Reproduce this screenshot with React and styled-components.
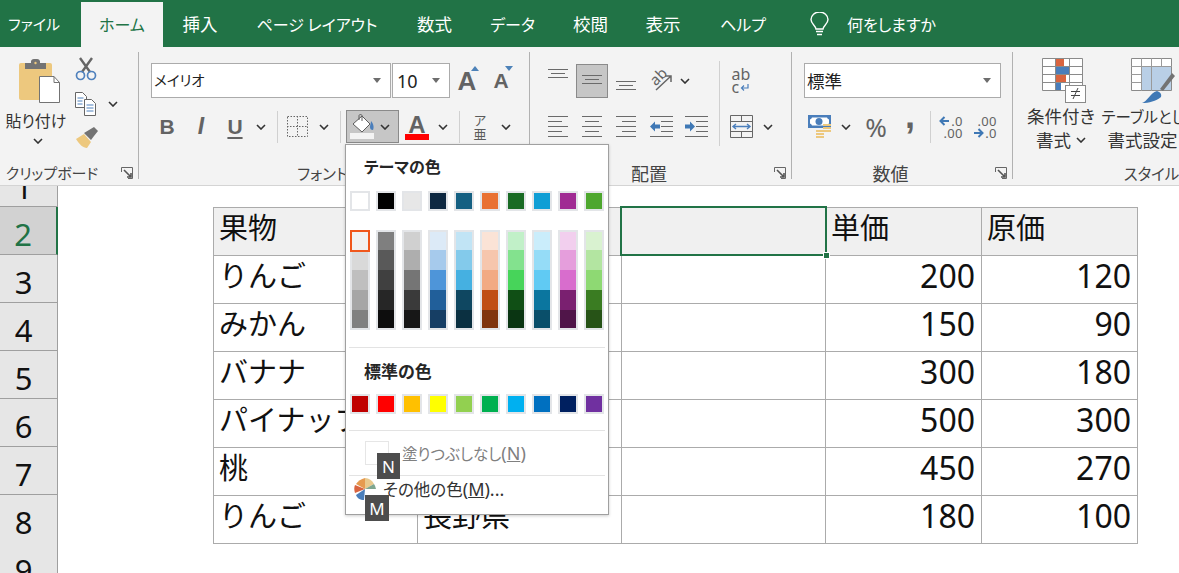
import React from "react";
import styled, { createGlobalStyle } from "styled-components";

const JP = `"Noto Sans CJK JP", "Noto Sans", sans-serif`;
const LAT = `"Noto Sans", "Noto Sans CJK JP", sans-serif`;

const Global = createGlobalStyle`
  html, body { margin: 0; padding: 0; background: #fff; }
  body { font-family: ${JP}; font-feature-settings: "palt"; color: #222; }
  * { box-sizing: border-box; }
`;

const Page = styled.div`
  position: relative; width: 1179px; height: 573px; overflow: hidden; background: #fff;
`;

/* ---------- tab bar ---------- */
const TabBar = styled.div`
  display: flex; align-items: flex-end; height: 47px; padding-top: 2px; background: #217346;
`;
const Tab = styled.div`
  height: 45px; display: flex; align-items: center; justify-content: center;
  width: ${p => p.$w}px; flex: none;
  font-size: ${p => p.$s}px; padding: 0 ${p => p.$pr || 0}px 2px 0; white-space: nowrap;
  color: ${p => (p.$active ? "#217346" : "#fff")};
  background: ${p => (p.$active ? "#f3f3f3" : "transparent")};
`;
const TellMe = styled.div`
  display: flex; align-items: center; gap: 18px; margin-left: 22px; height: 45px;
  font-size: 16px; color: #fff; padding-bottom: 2px;
`;

/* ---------- ribbon ---------- */
const Ribbon = styled.div`
  display: flex; height: 139px; padding-top: 5px; background: #f3f3f3;
  border-bottom: 1px solid #d4d4d4; overflow: hidden;
`;
const Group = styled.div`
  flex: none; width: ${p => p.$w}px; height: 127px; display: flex; flex-direction: column;
  border-right: ${p => (p.$open ? "none" : "1px solid #b1b1b1")};
`;
const GroupBody = styled.div`
  flex: 1; display: flex; min-height: 0;
  padding: ${p => p.$pad || "0"};
`;
const GroupFooter = styled.div`
  height: 12px; flex: none; display: flex; align-items: center; padding-right: 5px;
`;
const GroupLabel = styled.div`
  flex: 1; text-align: center; font-size: ${p => p.$s || 15.5}px; line-height: 12px; color: #444; white-space: nowrap;
  padding-right: ${p => p.$shift || 0}px;
`;
const Launcher = styled.svg`
  flex: none; width: 12px; height: 12px; margin-left: 6px;
`;
const Stack = styled.div`
  display: flex; flex-direction: column; gap: ${p => p.$gap ?? 0}px; flex: none;
`;
const ToolRow = styled.div`
  display: flex; align-items: center; height: ${p => p.$h || 33}px; flex: none;
  margin-top: ${p => p.$mt || 0}px;
`;
const Tool = styled.div`
  flex: none; width: ${p => p.$w}px; height: 100%; display: flex; align-items: center; justify-content: center;
  margin-left: ${p => p.$ml || 0}px; color: #636363;
`;
const Pressed = styled(Tool)`
  background: #c6c6c6; border: 1px solid #8a8a8a;
`;
const VSep = styled.div`
  flex: none; width: 1px; height: ${p => p.$h || 32}px; background: #d0d0d0;
  margin: 0 ${p => p.$r || 0}px 0 ${p => p.$l || 0}px;
  align-self: ${p => p.$top ? "flex-start" : "center"};
`;
const Combo = styled.div`
  flex: none; width: ${p => p.$w}px; height: 35px; margin-left: ${p => p.$ml || 0}px;
  display: flex; align-items: center; justify-content: space-between;
  padding: 0 9px 0 2px; background: #fff; border: 1px solid #ababab;
  color: #222;
`;
const ComboText = styled.span`
  font-family: ${p => (p.$latin ? LAT : JP)}; font-size: ${p => p.$s}px;
  padding-left: ${p => (p.$latin ? 2 : 0)}px; line-height: 1;
`;
const Caret = styled.i`
  width: 0; height: 0; border: 4px solid transparent; border-top: 5px solid #6d6d6d; border-bottom: 0;
`;
const Glyph = styled.span`
  font-family: "Liberation Sans", sans-serif; font-weight: 700; font-size: ${p => p.$s || 21}px;
  font-style: ${p => (p.$italic ? "italic" : "normal")}; line-height: 1; color: #636363;
  text-decoration: ${p => (p.$under ? "underline" : "none")}; text-underline-offset: 3px;
`;
const LetterButton = styled.div`
  position: relative; flex: none; width: 34px; height: 100%; display: flex; align-items: center; justify-content: center;
`;
const Tri = styled.i`
  position: absolute; top: 3px; right: 5px; width: 0; height: 0; border: 4px solid transparent;
  ${p => p.$up ? "border-bottom: 5px solid #4d82b8; border-top: 0;" : "border-top: 5px solid #4d82b8; border-bottom: 0;"}
`;
const AColor = styled.div`
  display: flex; flex-direction: column; align-items: center; gap: 0; width: 24px;
`;
const ABar = styled.div`
  width: 24px; height: 6px; background: #ff0000; margin-top: -3px;
`;
const Phonetic = styled.div`
  display: flex; flex-direction: column; align-items: center; font-size: 13px; line-height: 14px; color: #5a5a5a;
`;
const PasteBtn = styled.div`
  flex: none; width: 72px; display: flex; flex-direction: column; align-items: center; padding-top: 6px;
`;
const PasteArt = styled.div`
  margin-left: 7px; height: 46px; display: flex;
`;
const PasteText = styled.div`
  font-size: 16px; line-height: 20px; margin-top: 6px; white-space: nowrap; color: #333;
`;
const PasteChevron = styled.div`
  margin: 6px 0 0 4px; height: 10px; display: flex; align-items: center;
`;
const ClipTools = styled.div`
  flex: none; display: flex; flex-direction: column; margin-left: 3px;
`;
const ClipRow = styled.div`
  display: flex; align-items: center; height: 34.5px; gap: 11px;
`;
const AbRot = styled.span`
  position: relative; display: block; width: 26px; height: 26px;
`;
const AbText = styled.span`
  position: absolute; left: 0; top: 0; font-family: ${LAT}; font-size: 15px; line-height: 16px; color: #636363;
  transform: rotate(-45deg);
`;
const WrapIcon = styled.div`
  display: flex; flex-direction: column; font-family: ${LAT}; font-size: 16px; line-height: 13px; color: #636363;
`;
const WrapLine = styled.div`
  display: flex; align-items: center; gap: 1px;
`;
const Percent = styled.span`
  font-family: ${LAT}; font-size: 26px; color: #636363; line-height: 1;
`;
const Comma = styled.span`
  font-family: "Liberation Sans", sans-serif; font-weight: 700; font-size: 36px; line-height: 1; color: #636363; margin-top: -22px;
`;
const Decimal = styled.div`
  display: flex; flex-direction: column; align-items: flex-end; font-family: ${LAT}; font-size: 13px; line-height: 12px; color: #636363; letter-spacing: .3px;
`;
const DecLine = styled.div`
  display: flex; align-items: center; gap: 1px;
`;
const BigBtn = styled.div`
  flex: none; width: ${p => p.$w}px; display: flex; flex-direction: column; align-items: center; padding-top: 6px;
`;
const BigArt = styled.div`
  height: 46px; display: flex; margin-left: ${p => p.$ml}px;
`;
const BigText = styled.div`
  font-size: ${p => p.$s || 17.5}px; line-height: 24px; text-align: center; white-space: nowrap; color: #333;
  display: flex; align-items: center; justify-content: center; gap: 5px; height: 24px;
`;

/* ---------- sheet ---------- */
const Sheet = styled.div`
  display: flex; flex-direction: column;
`;
const SheetRow = styled.div`
  display: grid; grid-template-columns: 58px 155px 204px 204px 204px 156px 157px;
  height: ${p => p.$h || 48}px; overflow: ${p => (p.$clip ? "hidden" : "visible")};
`;
const RowHead = styled.div`
  display: flex; justify-content: center; padding: ${p => (p.$cut ? "0" : "6px")} 10px 0 0;
  align-items: ${p => (p.$cut ? "flex-end" : "center")};
  overflow: hidden;
  font-family: "Noto Sans", sans-serif; font-size: 31px; line-height: 44px; color: ${p => (p.$sel ? "#217346" : "#111")};
  background: ${p => (p.$sel ? "#d2d2d2" : "#e6e6e6")};
  border-right: ${p => (p.$sel ? "2px solid #217346" : "1px solid #9f9f9f")};
  border-bottom: 1px solid #9f9f9f;
`;
const CutDigit = styled.span`
  display: block; line-height: 44px; margin-bottom: -3px;
`;
const Blank = styled.div``;
const Cell = styled.div`
  position: relative; display: flex; align-items: center; overflow: hidden;
  padding: ${p => (p.$num ? "0 6px 8px" : "0 6px 11px 5px")};
  justify-content: ${p => (p.$num ? "flex-end" : "flex-start")};
  background: ${p => (p.$head ? "#f0f0f0" : "#fff")};
  border-top: 1px solid #ababab; border-left: 1px solid #ababab;
  ${p => p.$last && "border-right: 1px solid #ababab;"}
  ${p => p.$bottom && "border-bottom: 1px solid #ababab; height: 49px;"}
  font-family: ${p => (p.$num ? LAT : JP)}; font-size: ${p => (p.$num ? 32 : 29)}px; color: #111; white-space: nowrap;
  font-feature-settings: normal;
`;
const Selection = styled.div`
  position: absolute; left: 620px; top: 206px; width: 207px; height: 50px; border: 2px solid #217346; pointer-events: none;
`;
const Handle = styled.div`
  position: absolute; right: -5px; bottom: -5px; width: 7px; height: 7px; background: #217346; border: 1px solid #fff;
`;

/* ---------- fill menu ---------- */
const FillMenu = styled.div`
  position: absolute; left: 345px; top: 144px; width: 264px; height: 371px;
  background: #fff; border: 1px solid #a0a0a0; box-shadow: 0 1px 3px rgba(0,0,0,.2);
  display: flex; flex-direction: column;
`;
const MenuHead = styled.div`
  font-size: ${p => p.$s}px; font-weight: 700; line-height: 24px; padding-left: 18px; color: #262626; margin-top: ${p => p.$mt}px;
`;
const SwatchRow = styled.div`
  display: flex; gap: 6px; padding-left: 4px; margin-top: ${p => p.$mt}px;
`;
const Swatch = styled.div`
  width: 20px; height: 20px; border: 2px solid #e3e5e8; background: ${p => p.$c};
`;
const ShadeCol = styled.div`
  display: flex; flex-direction: column; width: 20px; border: 2px solid #e3e5e8;
`;
const Shade = styled.div`
  height: ${p => p.$h}px; background: ${p => p.$c};
  ${p => p.$sel && "outline: 2px solid #f0571c; outline-offset: 0; position: relative;"}
`;
const MenuSep = styled.div`
  height: 1px; background: #e3e3e3; margin: ${p => p.$mt || 0}px 3px 0;
`;
const NoFill = styled.div`
  display: flex; align-items: center; gap: 13px; height: 44px; padding-left: 19px;
  font-size: 15.5px; color: #808080;
`;
const EmptyBox = styled.div`
  width: 24px; height: 24px; border: 1px solid #e6e6e6;
`;
const MoreRow = styled.div`
  display: flex; align-items: center; gap: 7px; padding: 0 0 12px 8px; height: 38px;
  font-size: 16.5px; color: #333;
`;
const Hotkey = styled.span`
  font-family: "Noto Sans", sans-serif; font-size: 18px;
`;
const KeyTip = styled.div`
  position: absolute; left: ${p => p.$x}px; top: ${p => p.$y}px; width: ${p => p.$w}px; height: 26px;
  display: flex; align-items: center; justify-content: center;
  background: #4d4d4d; color: #fff; font-family: "Noto Sans", sans-serif; font-size: 17px;
`;

/* ---------- icons ---------- */
const Chevron = () => (
  <svg width="10" height="6" viewBox="0 0 10 6"><path d="M1 1l4 4 4-4" fill="none" stroke="#333" strokeWidth="1.6" /></svg>
);
const LauncherIcon = () => (
  <Launcher viewBox="0 0 12 12">
    <path d="M.5 5V.5H11.5V11.5H7" fill="none" stroke="#666" strokeWidth="1" />
    <path d="M3 3l7 7M10 6v4H6" fill="none" stroke="#555" strokeWidth="1.6" />
  </Launcher>
);
const PasteIcon = () => (
  <svg width="42" height="46" viewBox="0 0 42 46">
    <rect x="0" y="5" width="33" height="37" rx="2" fill="#edc87e" />
    <path d="M6 5h6V3a3 3 0 013-2h3a3 3 0 013 2v2h6v6H6z" fill="#737373" />
    <circle cx="16.5" cy="5" r="1.2" fill="#edc87e" />
    <path d="M20.5 18.5H35l5.5 6v20h-20z" fill="#fff" stroke="#737373" />
    <path d="M35 18.5v6h5.5" fill="none" stroke="#737373" />
  </svg>
);
const ScissorsIcon = () => (
  <svg width="22" height="24" viewBox="0 0 22 24">
    <path d="M5 1l10 14M17 1L7 15" stroke="#666" strokeWidth="2.4" fill="none" />
    <circle cx="5.5" cy="18.5" r="4" fill="none" stroke="#4f81bd" strokeWidth="1.7" />
    <circle cx="16.5" cy="18.5" r="4" fill="none" stroke="#4f81bd" strokeWidth="1.7" />
  </svg>
);
const CopyIcon = () => (
  <svg width="22" height="24" viewBox="0 0 22 24">
    <path d="M.5.5h7l4 4v11H.5z" fill="#fff" stroke="#666" />
    <path d="M9.5 7.5h7l4 4v12h-11z" fill="#fff" stroke="#666" />
    <path d="M2.5 6h6M2.5 9h5M2.5 12h5M11.5 13h7M11.5 16h7M11.5 19h7" stroke="#4f81bd" />
  </svg>
);
const BrushIcon = () => (
  <svg width="24" height="22" viewBox="0 0 24 22">
    <path d="M1 12l8-5 7 8-4 6c-4 0-8-4-11-9z" fill="#edc87e" />
    <path d="M9 6l5-3 5-3 4 4-4 5-3 4z" fill="#737373" />
  </svg>
);
const BorderIcon = () => (
  <svg width="21" height="21" viewBox="0 0 21 21">
    <path d="M.5.5h20v20H.5zM10.5 0v21M0 10.5h21" fill="none" stroke="#666" strokeDasharray="1.5 1.5" />
  </svg>
);
const FillIcon = () => (
  <svg width="25" height="25" viewBox="0 0 25 25">
    <path d="M3 10l9-8 8 8-8 8z" fill="#fff" stroke="#5c5c5c" />
    <path d="M9 6V1.5a1.6 1.6 0 013 0V7" fill="none" stroke="#5c5c5c" />
    <path d="M21 7c3 3 3 7 2 9-2 0-3-1-3-3 0-2 1-4 1-6z" fill="#4a7ebb" />
    <rect x="0" y="19" width="24" height="6" fill="#f3f3f3" />
  </svg>
);
const Lines = ({ ys, short = [], w = 20, h, align = "center", color = "#6a6a6a" }) => (
  <svg width={w} height={h} viewBox={`0 0 ${w} ${h}`}>
    {ys.map((y, i) => {
      const s = short.includes(i) ? 14 : w;
      const x = align === "left" ? 0 : align === "right" ? w - s : (w - s) / 2;
      return <rect key={y} x={x} y={y} width={s} height="1" fill={color} />;
    })}
  </svg>
);
const OrientArrow = () => (
  <svg width="26" height="26" viewBox="0 0 26 26" style={{ position: "absolute", left: 0, top: 0 }}>
    <path d="M7 22L22 8M16 8h6v6" fill="none" stroke="#666" strokeWidth="1.5" />
  </svg>
);
const IndentIcon = ({ out }) => (
  <svg width="23" height="21" viewBox="0 0 23 21">
    <path d="M0 .5h23M0 20.5h23M11 5.5h12M11 10.5h12M11 15.5h12" stroke="#6a6a6a" />
    {out
      ? <path d="M0 10.5l5-5v3h5v4H5v3z" fill="#3f78b5" />
      : <path d="M10 10.5l-5-5v3H0v4h5v3z" fill="#3f78b5" />}
  </svg>
);
const MergeIcon = () => (
  <svg width="23" height="23" viewBox="0 0 23 23">
    <path d="M.5.5h22v22H.5zM0 6.5h23M0 16.5h23M11.5 0v6M11.5 17v6" fill="none" stroke="#666" />
    <path d="M3 11.5h17M6 9l-3 2.5L6 14M17 9l3 2.5L17 14" fill="none" stroke="#4a7ebb" strokeWidth="1.4" />
  </svg>
);
const ReturnArrow = () => (
  <svg width="9" height="8" viewBox="0 0 9 8"><path d="M8 0v4H2M4 1.5L1.5 4 4 6.500" fill="none" stroke="#4a7ebb" strokeWidth="1.2" /></svg>
);
const AccountIcon = () => (
  <svg width="24" height="24" viewBox="0 0 24 24">
    <rect x="0" y="0" width="23" height="13" fill="#4a7ebb" />
    <path d="M4 2.500h15a3 3 0 002 2v4a3 3 0 00-2 2H4a3 3 0 00-2-2v-4a3 3 0 002-2z" fill="#fff" />
    <circle cx="11" cy="6.500" r="3.500" fill="#4a7ebb" />
    <path d="M15 9h8v2h-8zM15 12h8v2h-8zM15 15h8v2h-8zM8 15h8v2H8zM8 18h8v2H8zM8 21h8v2H8z" fill="#edc87e" />
  </svg>
);
const DecArrow = ({ left }) => (
  <svg width="11" height="10" viewBox="0 0 11 10">
    {left ? <path d="M10 5H2M5.500 1L1.500 5l4 4" fill="none" stroke="#3f78b5" strokeWidth="2" />
      : <path d="M1 5h8M5.500 1l4 4-4 4" fill="none" stroke="#3f78b5" strokeWidth="2" />}
  </svg>
);
const CondIcon = () => (
  <svg width="44" height="46" viewBox="0 0 44 46">
    <path d="M.5.5h40v32H.5zM13.500 0v33M27.500 0v33M0 8.500h41M0 16.500h41M0 24.500h41" fill="#fff" stroke="#8a8a8a" />
    <rect x="14" y="1" width="8" height="7" fill="#d9643f" />
    <rect x="14" y="9" width="13" height="7" fill="#4a7ebb" />
    <rect x="14" y="17" width="10" height="7" fill="#d9643f" />
    <rect x="14" y="25" width="5" height="7" fill="#4a7ebb" />
    <rect x="23.500" y="27.500" width="20" height="17" fill="#fff" stroke="#8a8a8a" />
    <path d="M29 33.500h9M29 37.500h9M31 41l5-11" stroke="#444" fill="none" />
  </svg>
);
const TableIcon = () => (
  <svg width="44" height="46" viewBox="0 0 44 46">
    <path d="M.5.5h40v32H.5z" fill="#fff" stroke="#8a8a8a" />
    <rect x="11" y="9" width="29" height="23" fill="#b9cfe6" />
    <path d="M10.500 0v33M20.500 0v33M30.500 0v9M0 8.500h41M0 16.500h11M0 24.500h11" fill="none" stroke="#9a9a9a" />
    <path d="M29 31l12-16 3 3-12 15z" fill="#737373" />
    <path d="M11 45c5-1 8-10 15-12 3 1 5 3 4 6-5 4-12 6-19 6z" fill="#3f78b5" />
  </svg>
);
const BulbIcon = () => (
  <svg width="19" height="24" viewBox="0 0 19 24">
    <path d="M6 17c0-3-5-5-5-9.500a8.500 7.500 0 0117 0C18 12 13 14 13 17z" fill="none" stroke="#fff" strokeWidth="1.4" />
    <path d="M6 19.500h7M7 22.500h5" stroke="#fff" strokeWidth="1.5" />
  </svg>
);
const PieIcon = () => (
  <svg width="22" height="22" viewBox="0 0 22 22">
    <path d="M11 11V0a11 11 0 019 6z" fill="#e9c98d" />
    <path d="M11 11l9-5a11 11 0 012 5z" fill="#7fa68f" />
    <path d="M11 11l-1 11C6 22 3 20 2 17z" fill="#4a7ebb" />
    <path d="M11 11L1 15C0 12 0 9 1 7z" fill="#d9643f" />
    <path d="M11 11L2 6c2-3 5-5 9-6z" fill="#e69a4f" />
  </svg>
);

/* ---------- data ---------- */
const THEME = ["#ffffff", "#000000", "#e7e7e7", "#0e2841", "#156082", "#e97132", "#196b24", "#0f9ed5", "#a02b93", "#4ea72e"];
const SHADES = [
  ["#f2f2f2", "#d9d9d9", "#bfbfbf", "#a6a6a6", "#808080"],
  ["#7f7f7f", "#595959", "#404040", "#262626", "#0d0d0d"],
  ["#d0d0d0", "#aeaeae", "#757575", "#3a3a3a", "#171717"],
  ["#dceaf7", "#a6caec", "#4e95d9", "#215f9a", "#163e64"],
  ["#c1e4f5", "#83caeb", "#45b0e1", "#0f4761", "#0b3041"],
  ["#fbe3d6", "#f6c6ad", "#f2aa84", "#c04f15", "#80350e"],
  ["#c1f0c8", "#83e28e", "#47d45a", "#104f15", "#0a3512"],
  ["#caedfb", "#95dcf7", "#60caf3", "#0b769f", "#0a4f6a"],
  ["#f2cfee", "#e59edc", "#d86dcd", "#7a2070", "#501549"],
  ["#d9f2d0", "#b3e5a1", "#8ed973", "#3a7c22", "#275317"],
];
const SHADE_H = [18, 20, 20, 20, 18];
const STANDARD = ["#c00000", "#ff0000", "#ffc000", "#ffff00", "#92d050", "#00b050", "#00b0f0", "#0070c0", "#002060", "#7030a0"];
const TABS = [
  { t: "ファイル", w: 81, s: 15, pr: 13 }, { t: "ホーム", w: 82, s: 16, a: true }, { t: "挿入", w: 74, s: 17.5 },
  { t: "ページ レイアウト", w: 160, s: 16 }, { t: "数式", w: 75, s: 17.5 }, { t: "データ", w: 81, s: 16 },
  { t: "校閲", w: 75, s: 17.5 }, { t: "表示", w: 70, s: 17.5 }, { t: "ヘルプ", w: 90, s: 16 },
];
const ROWS = [
  [3, "りんご", "", 200, 120], [4, "みかん", "", 150, 90], [5, "バナナ", "", 300, 180],
  [6, "パイナップル", "", 500, 300], [7, "桃", "", 450, 270], [8, "りんご", "長野県", 180, 100],
];

const TabsBar = () => (
  <TabBar>
    {TABS.map(x => <Tab key={x.t} $w={x.w} $s={x.s} $pr={x.pr} $active={x.a}>{x.t}</Tab>)}
    <TellMe><BulbIcon />何をしますか</TellMe>
  </TabBar>
);

const ClipboardGroup = () => (
  <Group $w={139}>
    <GroupBody>
      <PasteBtn>
        <PasteArt><PasteIcon /></PasteArt>
        <PasteText>貼り付け</PasteText>
        <PasteChevron><Chevron /></PasteChevron>
      </PasteBtn>
      <ClipTools>
        <ClipRow><ScissorsIcon /></ClipRow>
        <ClipRow><CopyIcon /><Chevron /></ClipRow>
        <ClipRow><BrushIcon /></ClipRow>
      </ClipTools>
    </GroupBody>
    <GroupFooter><GroupLabel $s={15} $shift={11}>クリップボード</GroupLabel><LauncherIcon /></GroupFooter>
  </Group>
);

const FontGroup = () => (
  <Group $w={391}>
    <GroupBody $pad="11px 0 0 12px">
      <Stack>
        <ToolRow $h={35}>
          <Combo $w={240}><ComboText $s={14.5}>メイリオ</ComboText><Caret /></Combo>
          <Combo $w={58} $ml={1}><ComboText $latin $s={18}>10</ComboText><Caret /></Combo>
          <LetterButton><Glyph $s={26}>A</Glyph><Tri $up /></LetterButton>
          <LetterButton><Glyph $s={21}>A</Glyph><Tri /></LetterButton>
        </ToolRow>
        <ToolRow $mt={12}>
          <Tool $w={32}><Glyph>B</Glyph></Tool>
          <Tool $w={36}><Glyph $italic $s={23}>I</Glyph></Tool>
          <Tool $w={32}><Glyph $under>U</Glyph></Tool>
          <Tool $w={20}><Chevron /></Tool>
          <VSep $l={6} />
          <Tool $w={38}><BorderIcon /></Tool>
          <Tool $w={16}><Chevron /></Tool>
          <VSep $l={8} $r={5} />
          <Pressed $w={53}>
            <FillIcon />
            <Tool $w={20}><Chevron /></Tool>
          </Pressed>
          <Tool $w={36}><AColor><Glyph $s={24}>A</Glyph><ABar /></AColor></Tool>
          <Tool $w={16}><Chevron /></Tool>
          <VSep $l={8} />
          <Tool $w={40}><Phonetic><span>ア</span><span>亜</span></Phonetic></Tool>
          <Tool $w={12}><Chevron /></Tool>
        </ToolRow>
      </Stack>
    </GroupBody>
    <GroupFooter><GroupLabel>フォント</GroupLabel><LauncherIcon /></GroupFooter>
  </Group>
);

const AlignGroup = () => (
  <Group $w={262}>
    <GroupBody $pad="9px 0 0 12px">
      <Stack>
        <ToolRow $h={34} $mt={3}>
          <Tool $w={32}><Lines h={34} ys={[5, 9, 13]} short={[1]} /></Tool>
          <Pressed $w={32} $ml={2}><Lines h={32} ys={[10, 14, 18]} short={[1]} /></Pressed>
          <Tool $w={32} $ml={2}><Lines h={34} ys={[17, 21, 25]} short={[1]} /></Tool>
          <Tool $w={36} $ml={2}><AbRot><AbText>ab</AbText><OrientArrow /></AbRot></Tool>
          <Tool $w={10}><Chevron /></Tool>
        </ToolRow>
        <ToolRow $mt={12}>
          <Tool $w={32}><Lines h={21} ys={[0, 5, 10, 15, 20]} short={[1, 3]} align="left" /></Tool>
          <Tool $w={32} $ml={2}><Lines h={21} ys={[0, 5, 10, 15, 20]} short={[1, 3]} /></Tool>
          <Tool $w={32} $ml={2}><Lines h={21} ys={[0, 5, 10, 15, 20]} short={[1, 3]} align="right" /></Tool>
          <Tool $w={34} $ml={2}><IndentIcon out /></Tool>
          <Tool $w={36}><IndentIcon /></Tool>
        </ToolRow>
      </Stack>
      <VSep $h={85} $l={5} $top />
      <Stack>
        <ToolRow $h={34} $mt={3}>
          <Tool $w={42}>
            <WrapIcon>
              <span>ab</span>
              <WrapLine><span>c</span><ReturnArrow /></WrapLine>
            </WrapIcon>
          </Tool>
        </ToolRow>
        <ToolRow $mt={12}>
          <Tool $w={42}><MergeIcon /></Tool>
          <Tool $w={12}><Chevron /></Tool>
        </ToolRow>
      </Stack>
    </GroupBody>
    <GroupFooter><GroupLabel $s={18}>配置</GroupLabel><LauncherIcon /></GroupFooter>
  </Group>
);

const NumberGroup = () => (
  <Group $w={221}>
    <GroupBody $pad="11px 0 0 12px">
      <Stack>
        <ToolRow $h={35}>
          <Combo $w={197}><ComboText $s={17.5}>標準</ComboText><Caret /></Combo>
        </ToolRow>
        <ToolRow $mt={12}>
          <Tool $w={32}><AccountIcon /></Tool>
          <Tool $w={20}><Chevron /></Tool>
          <Tool $w={40}><Percent>%</Percent></Tool>
          <Tool $w={28}><Comma>,</Comma></Tool>
          <VSep $l={6} />
          <Tool $w={40}>
            <Decimal>
              <DecLine><DecArrow left />.0</DecLine>
              <span>.00</span>
            </Decimal>
          </Tool>
          <Tool $w={28}>
            <Decimal>
              <span>.00</span>
              <DecLine><DecArrow />.0</DecLine>
            </Decimal>
          </Tool>
        </ToolRow>
      </Stack>
    </GroupBody>
    <GroupFooter><GroupLabel $s={18}>数値</GroupLabel><LauncherIcon /></GroupFooter>
  </Group>
);

const StyleGroup = () => (
  <Group $w={282} $open>
    <GroupBody $pad="0 0 0 6px">
      <BigBtn $w={84}>
        <BigArt $ml={5}><CondIcon /></BigArt>
        <BigText>条件付き</BigText>
        <BigText>書式 <Chevron /></BigText>
      </BigBtn>
      <BigBtn $w={94}>
        <BigArt $ml={6}><TableIcon /></BigArt>
        <BigText $s={15.5}>テーブルとして</BigText>
        <BigText>書式設定 <Chevron /></BigText>
      </BigBtn>
    </GroupBody>
    <GroupFooter><GroupLabel>スタイル</GroupLabel></GroupFooter>
  </Group>
);

const SheetArea = () => (
  <Sheet>
    <SheetRow $h={21} $clip><RowHead $cut><CutDigit>1</CutDigit></RowHead></SheetRow>
    <SheetRow>
      <RowHead $sel>2</RowHead><Blank />
      <Cell $head>果物</Cell><Cell $head /><Cell $head />
      <Cell $head>単価</Cell><Cell $head $last>原価</Cell>
    </SheetRow>
    {ROWS.map(([n, a, b, c, d]) => (
      <SheetRow key={n}>
        <RowHead>{n}</RowHead><Blank />
        <Cell $bottom={n === 8}>{a}</Cell>
        <Cell $bottom={n === 8}>{b}</Cell>
        <Cell $bottom={n === 8} />
        <Cell $num $bottom={n === 8}>{c}</Cell>
        <Cell $num $last $bottom={n === 8}>{d}</Cell>
      </SheetRow>
    ))}
    <SheetRow><RowHead>9</RowHead></SheetRow>
  </Sheet>
);

const Menu = () => (
  <FillMenu>
    <MenuHead $mt={9} $s={16}>テーマの色</MenuHead>
    <SwatchRow $mt={13}>{THEME.map(c => <Swatch key={c} $c={c} />)}</SwatchRow>
    <SwatchRow $mt={19}>
      {SHADES.map((col, i) => (
        <ShadeCol key={i}>
          {col.map((c, j) => <Shade key={c} $c={c} $h={SHADE_H[j]} $sel={i === 0 && j === 0} />)}
        </ShadeCol>
      ))}
    </SwatchRow>
    <MenuSep $mt={17} />
    <MenuHead $mt={11} $s={17}>標準の色</MenuHead>
    <SwatchRow $mt={11}>{STANDARD.map(c => <Swatch key={c} $c={c} />)}</SwatchRow>
    <MenuSep $mt={16} />
    <NoFill><EmptyBox /><span>塗りつぶしなし<Hotkey>(<u>N</u>)</Hotkey></span></NoFill>
    <MenuSep />
    <MoreRow><PieIcon /><span>その他の色<Hotkey>(<u>M</u>)...</Hotkey></span></MoreRow>
    <KeyTip $x={31} $y={308} $w={23}>N</KeyTip>
    <KeyTip $x={19} $y={350} $w={24}>M</KeyTip>
  </FillMenu>
);

export default function App() {
  return (
    <Page>
      <Global />
      <TabsBar />
      <Ribbon>
        <ClipboardGroup />
        <FontGroup />
        <AlignGroup />
        <NumberGroup />
        <StyleGroup />
      </Ribbon>
      <SheetArea />
      <Selection><Handle /></Selection>
      <Menu />
    </Page>
  );
}
